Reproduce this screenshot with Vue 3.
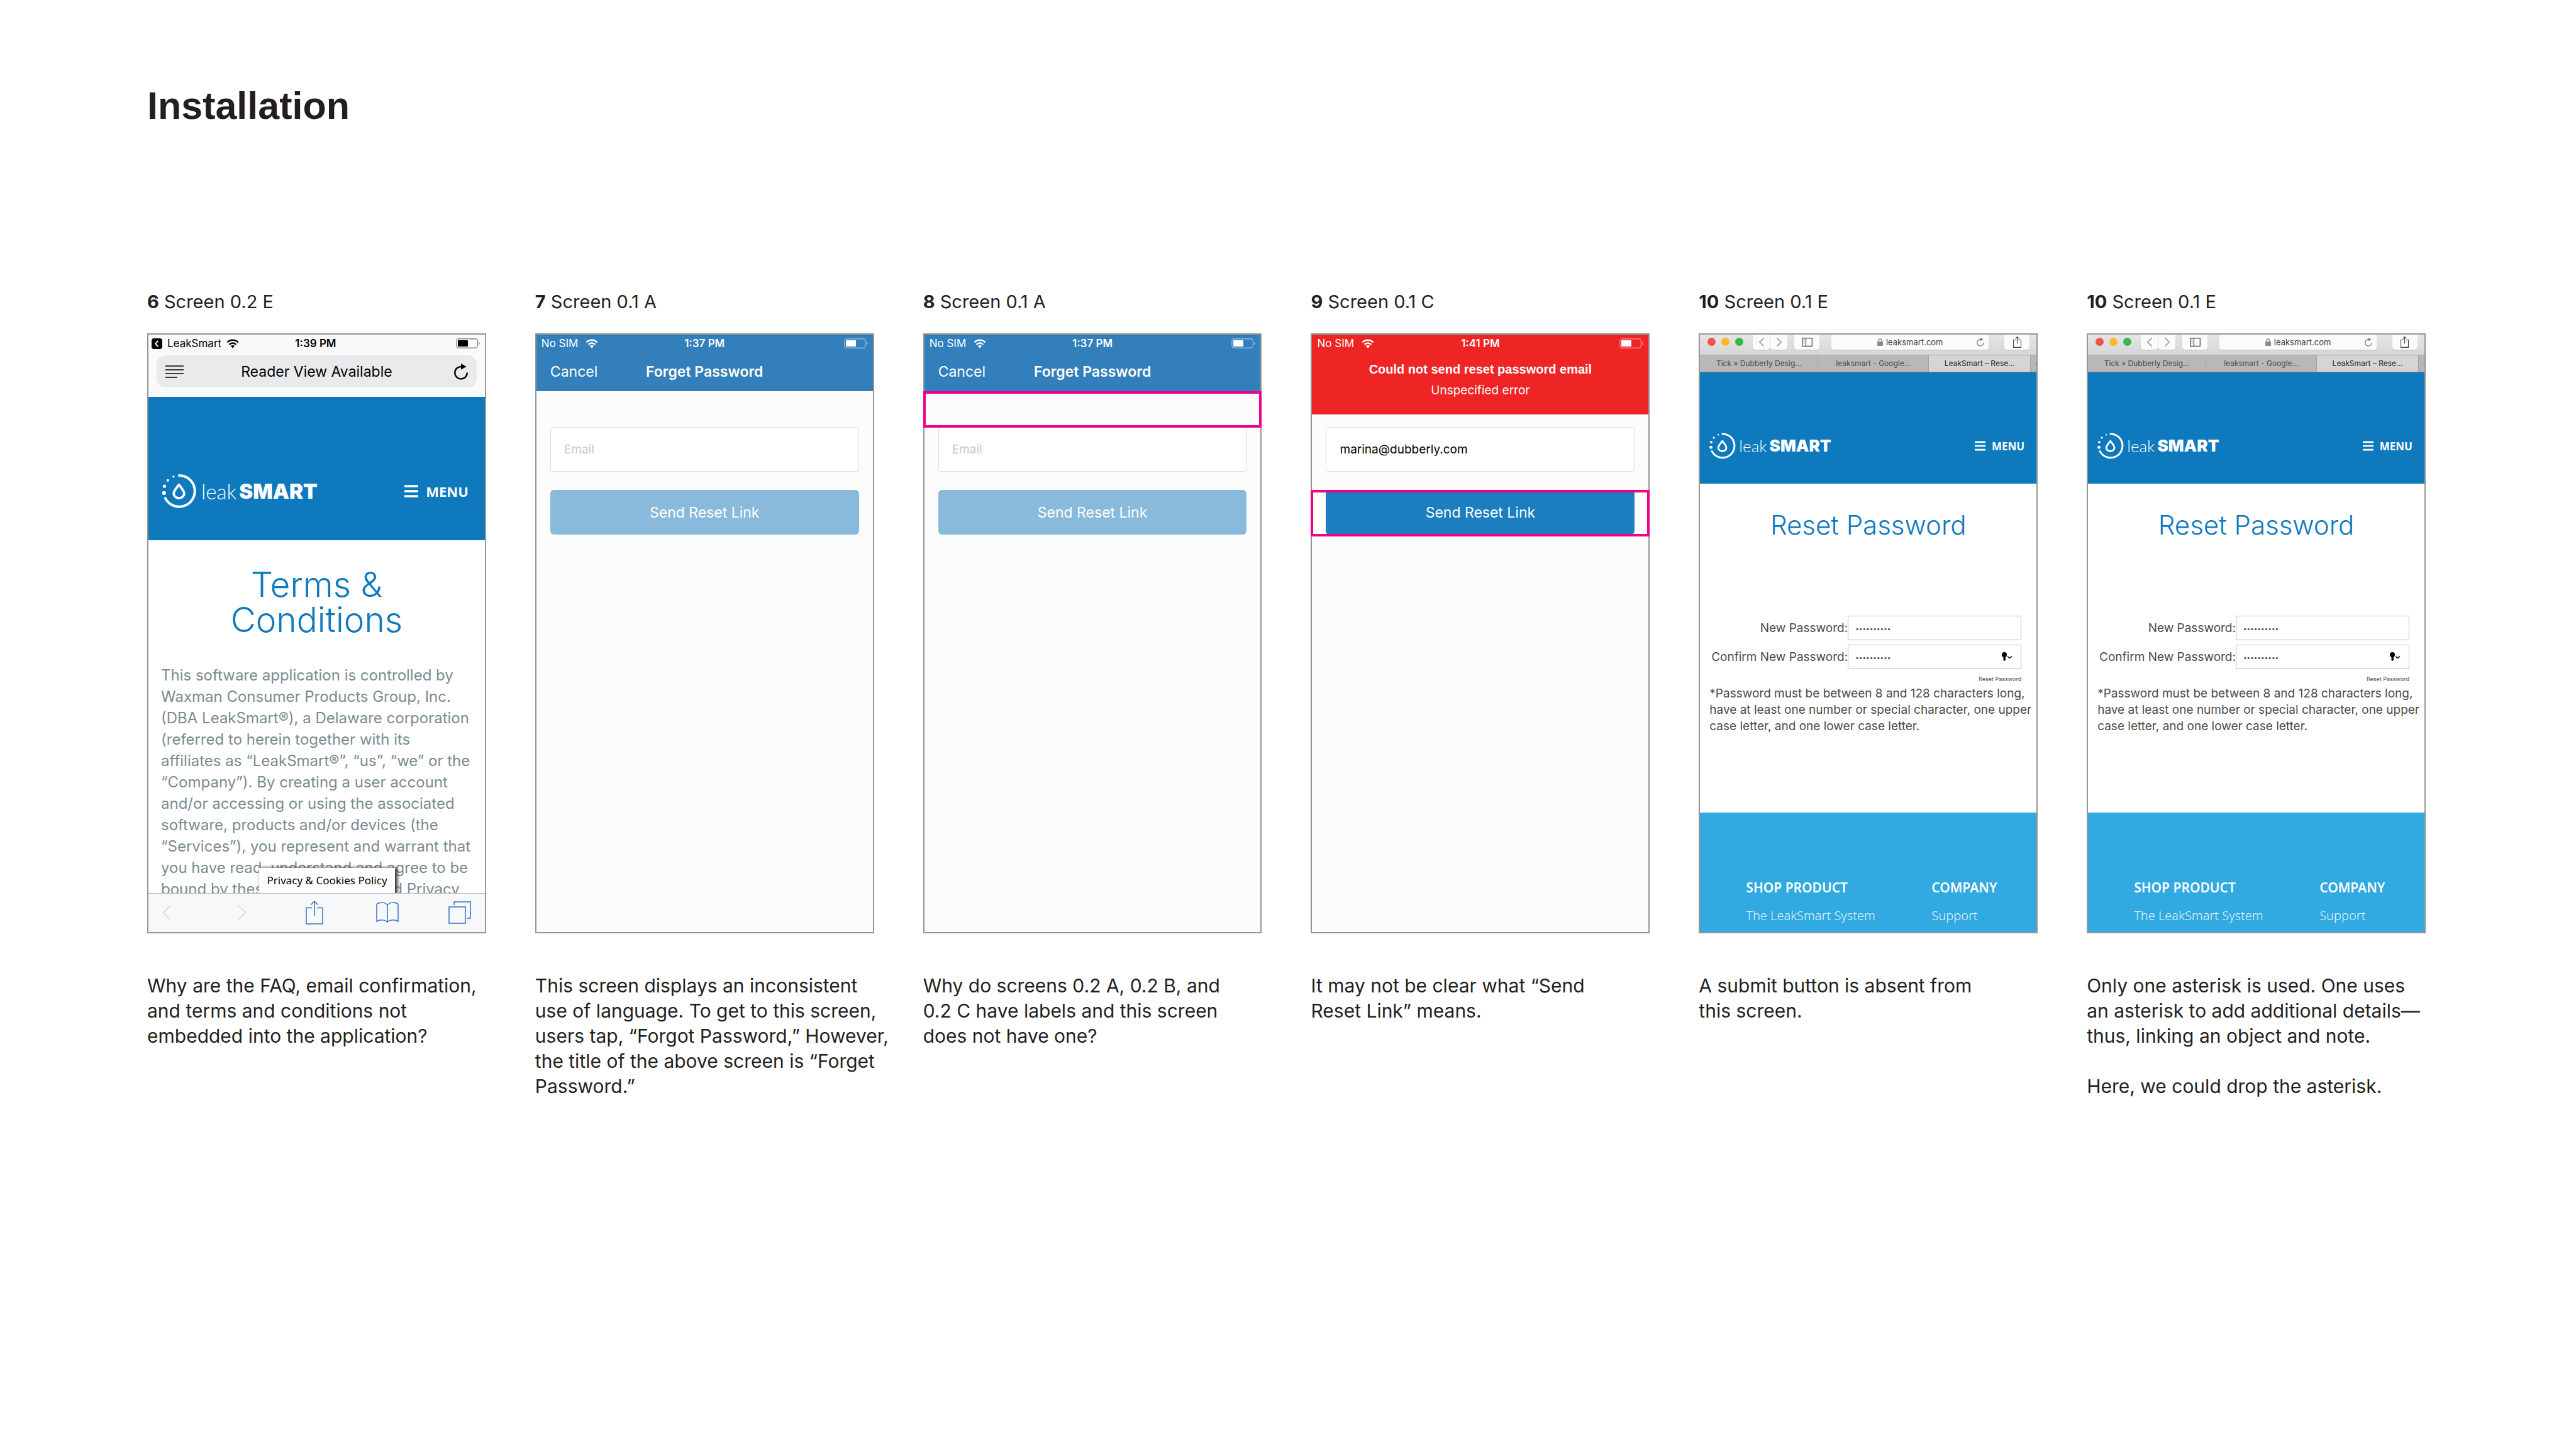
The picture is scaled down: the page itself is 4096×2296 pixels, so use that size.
<script setup>
const cards = [
  {
    kind: 'terms', number: '6', name: 'Screen 0.2 E',
    note: 'Why are the FAQ, email confirmation,\nand terms and conditions not\nembedded into the application?',
  },
  {
    kind: 'forgot', number: '7', name: 'Screen 0.1 A', time: '1:37 PM', email: '',
    note: 'This screen displays an inconsistent\nuse of language. To get to this screen,\nusers tap, “Forgot Password,” However,\nthe title of the above screen is “Forget\nPassword.”',
  },
  {
    kind: 'forgot', number: '8', name: 'Screen 0.1 A', time: '1:37 PM', email: '', mark: 'label',
    note: 'Why do screens 0.2 A, 0.2 B, and\n0.2 C have labels and this screen\ndoes not have one?',
  },
  {
    kind: 'forgot', number: '9', name: 'Screen 0.1 C', time: '1:41 PM', email: 'marina@dubberly.com', error: true, mark: 'button',
    note: 'It may not be clear what “Send\nReset Link” means.',
  },
  {
    kind: 'reset', number: '10', name: 'Screen 0.1 E',
    note: 'A submit button is absent from\nthis screen.',
  },
  {
    kind: 'reset', number: '10', name: 'Screen 0.1 E',
    note: 'Only one asterisk is used. One uses\nan asterisk to add additional details—\nthus, linking an object and note.\n\nHere, we could drop the asterisk.',
  },
]

const terms = [
  'This software application is controlled by',
  'Waxman Consumer Products Group, Inc.',
  '(DBA LeakSmart®), a Delaware corporation',
  '(referred to herein together with its',
  'affiliates as “LeakSmart®”, “us”, “we” or the',
  '“Company”). By creating a user account',
  'and/or accessing or using the associated',
  'software, products and/or devices (the',
  '“Services”), you represent and warrant that',
  'you have read, understand and agree to be',
  'bound by these Terms of Use and Privacy',
].join('\n')

const rule = [
  '*Password must be between 8 and 128 characters long,',
  'have at least one number or special character, one upper',
  'case letter, and one lower case letter.',
].join('\n')
</script>

<template>
  <svg class="sprite" aria-hidden="true">
    <symbol id="wifi" viewBox="0 0 20 15">
      <path d="M1.4 5.4a12.2 12.2 0 0 1 17.2 0M4.6 8.8a7.7 7.7 0 0 1 10.8 0" fill="none" stroke="currentColor" stroke-width="2.5" />
      <path d="M6.9 11.3 10 14.6l3.1-3.3a4.5 4.5 0 0 0-6.2 0z" fill="currentColor" />
    </symbol>
    <symbol id="battery" viewBox="0 0 38 16">
      <rect x=".75" y=".75" width="33.5" height="14.5" rx="3.5" fill="none" stroke="currentColor" stroke-width="1.3" opacity=".45" />
      <rect x="3" y="3" width="16" height="10" rx="1" fill="currentColor" />
      <path d="M36 5.2v5.6c1.1-.6 1.6-1.7 1.6-2.8S37.1 5.8 36 5.2z" fill="currentColor" opacity=".5" />
    </symbol>
    <symbol id="ring" viewBox="0 0 56 55">
      <path d="M28 2A25.3 25.3 0 1 1 5.5 39" fill="none" stroke="currentColor" stroke-width="4" stroke-linecap="round" />
      <circle cx="18.7" cy="3.8" r="1.7" fill="currentColor" />
      <circle cx="9.5" cy="10" r="2.1" fill="currentColor" />
      <circle cx="4" cy="19.5" r="2.6" fill="currentColor" />
      <circle cx="3.3" cy="30.5" r="3.2" fill="currentColor" />
      <path d="M27.5 17C24 21.8 19 27 19 31a8.5 7.8 0 0 0 17 0c0-4-5-9.2-8.5-14z" fill="none" stroke="currentColor" stroke-width="3.8" stroke-linejoin="round" />
    </symbol>
    <symbol id="bars" viewBox="0 0 22 20">
      <path d="M0 2h22M0 10h22M0 18h22" stroke="currentColor" stroke-width="3.4" />
    </symbol>
    <symbol id="share" viewBox="0 0 28 38">
      <path d="M10 11.5H1V37h26V11.5h-9M14 24V1.5M8.5 6.5 14 1l5.5 5.5" fill="none" stroke="currentColor" stroke-width="var(--line, 1.5)" />
    </symbol>
    <symbol id="reload" viewBox="0 0 22 26">
      <path d="M12 5A9.7 9.7 0 1 0 20.7 14.5" fill="none" stroke="currentColor" stroke-width="2.4" />
      <path d="M11 0v9.8l8.5-4.9z" fill="currentColor" />
    </symbol>
    <symbol id="back" viewBox="0 0 14 24">
      <path d="M13 1 1.5 12 13 23" fill="none" stroke="currentColor" stroke-width="var(--line, 1.5)" />
    </symbol>
    <symbol id="forward" viewBox="0 0 14 24">
      <path d="M1 1l11.5 11L1 23" fill="none" stroke="currentColor" stroke-width="var(--line, 1.5)" />
    </symbol>
  </svg>

  <main class="page">
    <h1>Installation</h1>

    <div class="cards">
      <section v-for="(card, i) in cards" :key="i" class="card">
        <h2 class="label"><b>{{ card.number }}</b> {{ card.name }}</h2>

        <!-- Mobile Safari, terms page -->
        <div v-if="card.kind === 'terms'" class="screen terms">
          <header class="safari">
            <div class="status">
              <span class="status-left">
                <svg class="return" viewBox="0 0 17 17"><rect width="17" height="17" rx="4" fill="#000" /><path d="M10.5 4 6 8.5l4.5 4.5" fill="none" stroke="#fff" stroke-width="1.8" /></svg>
                LeakSmart
                <svg class="wifi"><use href="#wifi" /></svg>
              </span>
              <b>1:39 PM</b>
              <svg class="battery"><use href="#battery" /></svg>
            </div>
            <div class="address">
              <svg class="reader" viewBox="0 0 29 20"><path d="M0 1h29M0 7h29M0 13h29M0 19h19" stroke="#000" stroke-width="1.5" /></svg>
              <span>Reader View Available</span>
              <button type="button" aria-label="Reload"><svg class="reload"><use href="#reload" /></svg></button>
            </div>
          </header>
          <div class="brand">
            <a href="#" class="logo"><svg class="ring"><use href="#ring" /></svg><span>leak</span><b>SMART</b></a>
            <button type="button" class="menu"><svg class="bars"><use href="#bars" /></svg>MENU</button>
          </div>
          <div class="terms-body">
            <h3>Terms &amp;<br>Conditions</h3>
            <p>{{ terms }}</p>
            <a href="#" class="cookies">Privacy &amp; Cookies Policy</a>
          </div>
          <nav class="toolbar">
            <button type="button" class="dim first" aria-label="Back"><svg class="chevron"><use href="#back" /></svg></button>
            <button type="button" class="dim" aria-label="Forward"><svg class="chevron"><use href="#forward" /></svg></button>
            <button type="button" aria-label="Share"><svg class="share"><use href="#share" /></svg></button>
            <button type="button" aria-label="Bookmarks">
              <svg class="book" viewBox="0 0 36 34"><path d="M18 5C14 0 5 0 1 4v27c5-3 13-3 17 1 4-4 12-4 17-1V4C31 0 22 0 18 5zv27" fill="none" stroke="currentColor" stroke-width="1.5" /></svg>
            </button>
            <button type="button" aria-label="Tabs">
              <svg class="tabs-icon" viewBox="0 0 36 36"><path d="M1 9h26v26H1zM9 6V1h26v26h-6" fill="none" stroke="currentColor" stroke-width="1.5" /></svg>
            </button>
          </nav>
        </div>

        <!-- App, forget password -->
        <div v-else-if="card.kind === 'forgot'" class="screen forgot">
          <header :class="['app-head', { error: card.error }]">
            <div class="status">
              <span class="status-left">No SIM <svg class="wifi"><use href="#wifi" /></svg></span>
              <b>{{ card.time }}</b>
              <svg class="battery"><use href="#battery" /></svg>
            </div>
            <div v-if="card.error" class="alert" role="alert">
              <b>Could not send reset password email</b>
              <span>Unspecified error</span>
            </div>
            <div v-else class="nav">
              <button type="button">Cancel</button>
              <b>Forget Password</b>
            </div>
          </header>
          <form class="app-form" @submit.prevent>
            <input type="email" placeholder="Email" aria-label="Email" :value="card.email">
            <button type="submit" :class="{ ready: card.email }">Send Reset Link</button>
          </form>
          <div v-if="card.mark" :class="['mark', 'mark-' + card.mark]"></div>
        </div>

        <!-- Desktop Safari, reset password page -->
        <div v-else class="screen reset">
          <header class="window">
            <div class="window-bar">
              <span class="lights"><i></i><i></i><i></i></span>
              <span class="pair">
                <button type="button" aria-label="Back"><svg class="mini-chevron"><use href="#back" /></svg></button>
                <button type="button" aria-label="Forward"><svg class="mini-chevron"><use href="#forward" /></svg></button>
              </span>
              <button type="button" class="side" aria-label="Sidebar">
                <svg class="sidebar" viewBox="0 0 17 14"><path d="M.7.7h15.6v12.6H.7zM6.5.7v12.6M2.5 3.5h2M2.5 6h2M2.5 8.5h2" fill="none" stroke="#444" stroke-width="1.2" /></svg>
              </button>
              <div class="url">
                <svg class="lock" viewBox="0 0 9 12"><rect y="5" width="9" height="7" rx="1" fill="#8a8a8a" /><path d="M2 5.5V3.5a2.5 2.5 0 0 1 5 0v2" fill="none" stroke="#8a8a8a" stroke-width="1.3" /></svg>
                leaksmart.com
                <svg class="mini-reload"><use href="#reload" /></svg>
              </div>
              <button type="button" class="side out" aria-label="Share"><svg class="mini-share"><use href="#share" /></svg></button>
            </div>
            <div class="window-tabs">
              <span>Tick » Dubberly Desig...</span>
              <span>leaksmart - Google...</span>
              <span class="active">LeakSmart – Rese...</span>
              <span class="more"></span>
            </div>
          </header>
          <div class="brand">
            <a href="#" class="logo"><svg class="ring"><use href="#ring" /></svg><span>leak</span><b>SMART</b></a>
            <button type="button" class="menu"><svg class="bars"><use href="#bars" /></svg>MENU</button>
          </div>
          <h3>Reset Password</h3>
          <form class="reset-form" @submit.prevent>
            <label :for="'new-' + i">New Password:</label>
            <input :id="'new-' + i" type="password" value="leaksmart1">
            <label :for="'confirm-' + i">Confirm New Password:</label>
            <div class="keyed">
              <input :id="'confirm-' + i" type="password" value="leaksmart1">
              <svg class="key" viewBox="0 0 17 14"><circle cx="4" cy="4" r="4" fill="#000" /><path d="M2.5 6h3v7L4 14l-1.5-1.2z" fill="#000" /><path d="M5 9h1.5M5 11.5h1.5" stroke="#000" /><path d="M9 6.5l3.5 3 3.5-3" fill="none" stroke="#000" stroke-width="1.6" /></svg>
            </div>
            <button type="submit">Reset Password</button>
          </form>
          <p class="rule">{{ rule }}</p>
          <footer>
            <nav><b>SHOP PRODUCT</b><a href="#">The LeakSmart System</a></nav>
            <nav><b>COMPANY</b><a href="#">Support</a></nav>
          </footer>
        </div>

        <p class="note">{{ card.note }}</p>
      </section>
    </div>
  </main>
</template>

<style>
body {
  margin: 0;
  background: #fff;
}
</style>

<style scoped>
* {
  box-sizing: border-box;
}
.sprite {
  position: absolute;
  width: 0;
  height: 0;
}
svg {
  display: block;
  flex: none;
}
button,
input {
  margin: 0;
  padding: 0;
  border: 0;
  background: none;
  color: inherit;
  font: inherit;
}
a {
  color: inherit;
  text-decoration: none;
}
.page {
  padding: 130px 239px 120px 234px;
  color: #231f20;
  font-family: Inter, "Liberation Sans", sans-serif;
}
h1 {
  margin: 0 0 254px;
  font: 700 61px/76px "Liberation Sans", sans-serif;
}
.cards {
  display: grid;
  grid-template-columns: repeat(6, minmax(0, 1fr));
  gap: 78px;
}
.label {
  margin: 0 0 30px;
  font-size: 29px;
  font-weight: 400;
  line-height: 40px;
}
.note {
  margin: 63px 0 0;
  font-size: 30px;
  line-height: 40px;
  white-space: pre;
}
.screen {
  position: relative;
  display: flex;
  flex-direction: column;
  aspect-ratio: 539 / 954;
  border: 2px solid #969696;
  background: #fff;
}

/* Status bar */
.status {
  display: grid;
  grid-template-columns: 1fr auto 1fr;
  align-items: center;
  height: 28px;
  padding: 0 8px;
  font-size: 17px;
}
.status b {
  font-weight: 600;
}
.status-left {
  display: flex;
  align-items: center;
  gap: 12px;
}
.wifi {
  width: 20px;
  height: 15px;
}
.battery {
  width: 38px;
  height: 16px;
  justify-self: end;
}

/* Brand band */
.brand {
  display: flex;
  align-items: center;
  justify-content: space-between;
  padding: 123px 26px 51px 21px;
  background: #0e79bd;
  color: #fff;
}
.logo {
  display: flex;
  align-items: center;
  font-size: 33px;
  line-height: 54px;
}
.ring {
  width: 56px;
  height: 54px;
  margin-right: 7px;
}
.logo span {
  margin-right: 4px;
  font-family: Lato, sans-serif;
  font-weight: 300;
}
.logo b {
  font-weight: 900;
}
.menu {
  display: flex;
  align-items: center;
  gap: 12px;
  font: 700 22px "Open Sans", sans-serif;
}
.bars {
  width: 22px;
  height: 20px;
}

/* Terms screen */
.safari {
  background: #fafafa;
}
.terms .status {
  padding-left: 5px;
  color: #000;
}
.terms .status-left {
  gap: 8px;
}
.return {
  width: 17px;
  height: 17px;
}
.address {
  display: flex;
  align-items: center;
  justify-content: space-between;
  height: 51px;
  margin: 5px 13px 15px;
  padding: 0 14px;
  border-radius: 14px;
  background: #e9eaec;
  color: #000;
  font-size: 23px;
}
.address button {
  display: flex;
  justify-content: flex-end;
  width: 29px;
}
.reader {
  width: 29px;
  height: 20px;
}
.reload {
  width: 22px;
  height: 26px;
}
.terms-body {
  position: relative;
  flex: 1;
  min-height: 0;
  overflow: hidden;
}
h3 {
  margin: 42px 0 44px;
  color: #0e79bd;
  font-size: 55px;
  font-weight: 300;
  line-height: 56px;
  text-align: center;
}
.terms-body p {
  margin: 0 0 0 20px;
  color: #7a8c8f;
  font-size: 24px;
  line-height: 34px;
  white-space: pre;
}
.cookies {
  position: absolute;
  bottom: 0;
  left: 33%;
  padding: 0 12px;
  background: #fff;
  box-shadow: 3px 1px 5px 1px #333;
  color: #000;
  font: 400 17px/40px "Noto Sans", sans-serif;
}
.toolbar {
  display: flex;
  align-items: center;
  justify-content: space-between;
  height: 62px;
  padding: 0 22px;
  border-top: 1px solid #b9bbbd;
  background: #f7f8fa;
  color: #3573c4;
}
.toolbar button {
  display: flex;
  justify-content: center;
  width: 36px;
}
.toolbar .first {
  justify-content: flex-start;
  width: 30px;
}
.toolbar .dim {
  color: #d3d4d6;
}
.chevron {
  width: 14px;
  height: 24px;
}
.share {
  width: 28px;
  height: 38px;
}
.book {
  width: 36px;
  height: 34px;
}
.tabs-icon {
  width: 36px;
  height: 36px;
}

/* Forget password screens */
.forgot {
  background: #fcfcfc;
}
.app-head {
  height: 90px;
  background: #337fbb;
  color: #fff;
}
.app-head.error {
  height: 127px;
  background: #ef2525;
}
.nav {
  display: grid;
  grid-template-columns: 1fr auto 1fr;
  align-items: center;
  height: 62px;
  padding: 0 22px;
  font-size: 23px;
}
.nav button {
  justify-self: start;
}
.nav b {
  font-weight: 600;
}
.alert {
  display: flex;
  flex-direction: column;
  align-items: center;
  padding-top: 10px;
  font-size: 19px;
  line-height: 34px;
}
.alert b {
  font-family: "Liberation Sans", sans-serif;
  font-size: 20px;
}
.app-form {
  display: flex;
  flex-direction: column;
  gap: 29px;
  padding: 57px 22px 0;
}
.error + .app-form {
  padding-top: 20px;
}
.app-form input {
  height: 71px;
  padding: 0 21px;
  border: 1px solid #dcddde;
  border-radius: 4px;
  background: #fff;
  color: #000;
  font-size: 19px;
}
.app-form input::placeholder {
  color: #c7c7cc;
}
.app-form button {
  height: 71px;
  border-radius: 6px;
  background: #89badc;
  color: #fff;
  font-size: 23px;
}
.app-form .ready {
  background: #1c7ebe;
}
.mark {
  position: absolute;
  right: -2px;
  left: -2px;
  border: 4px solid #ec008c;
}
.mark-label {
  top: 90px;
  height: 58px;
}
.mark-button {
  top: 247px;
  height: 74px;
}

/* Reset password screens */
.window-bar {
  display: flex;
  align-items: flex-start;
  height: 32px;
  padding-left: 12px;
  background: linear-gradient(#e6e6e6, #d6d6d6);
  overflow: hidden;
}
.lights {
  display: flex;
  gap: 9px;
  margin: 5px 15px 0 0;
}
.lights i {
  width: 13px;
  height: 13px;
  border-radius: 50%;
  background: #f0544f;
}
.lights i:nth-child(2) {
  background: #fdb827;
}
.lights i:nth-child(3) {
  background: #3cb548;
}
.pair {
  display: flex;
  gap: 1px;
  margin-right: 11px;
}
.window-bar button,
.url {
  display: flex;
  align-items: center;
  justify-content: center;
  width: 27px;
  height: 24px;
  border-radius: 0 0 4px 4px;
  background: #fbfbfb;
  box-shadow: 0 1px 1px #bbb;
  color: #9a9a9a;
}
.window-bar .side {
  width: 40px;
  color: #444;
}
.window-bar .out {
  margin-right: 11px;
}
.url {
  position: relative;
  flex: 1;
  gap: 5px;
  margin: 0 25px 0 19px;
  color: #444;
  font-size: 13px;
}
.lock {
  width: 9px;
  height: 12px;
}
.mini-chevron {
  --line: 3;
  width: 8px;
  height: 14px;
}
.sidebar {
  width: 17px;
  height: 14px;
}
.mini-reload {
  position: absolute;
  right: 7px;
  width: 12px;
  height: 14px;
  color: #777;
}
.mini-share {
  --line: 2.6;
  width: 13px;
  height: 18px;
}
.window-tabs {
  display: grid;
  grid-template-columns: 187fr 176fr 162fr 10fr;
  height: 28px;
  border-top: 1px solid #a5a5a5;
  border-bottom: 1px solid #8f8f8f;
  background: #b8b8b8;
  color: #4a4a4a;
  font-size: 12px;
  line-height: 26px;
  text-align: center;
}
.window-tabs span + span {
  border-left: 1px solid #a2a2a2;
}
.window-tabs .active {
  background: #d5d5d5;
  color: #222;
}
.window-tabs .more {
  background: linear-gradient(#666, #666) right 13px / 2px 1px no-repeat;
}
.reset .brand {
  padding: 96px 19px 39px 15px;
}
.reset .logo {
  font-size: 26px;
  line-height: 42px;
}
.reset .ring {
  width: 42px;
  height: 42px;
  margin-right: 5px;
}
.reset .menu {
  gap: 10px;
  font-size: 17px;
}
.reset .bars {
  width: 17px;
  height: 16px;
}
.reset h3 {
  margin: 38px 0 116px;
  font-size: 42px;
}
.reset-form {
  display: grid;
  grid-template-columns: 1fr 276px;
  row-gap: 7px;
  align-items: center;
  padding-right: 24px;
  color: #4b4b4d;
  font-size: 19px;
  text-align: right;
}
.reset-form input {
  width: 100%;
  height: 39px;
  padding: 0 11px;
  border: 1px solid #b9b9bb;
  background: #fff;
  font-size: 10px;
}
.keyed {
  position: relative;
}
.key {
  position: absolute;
  top: 12px;
  right: 14px;
  width: 17px;
  height: 14px;
}
.reset-form button {
  grid-column: 2;
  justify-self: end;
  margin-top: 3px;
  font-size: 9px;
  line-height: 12px;
}
.rule {
  margin: 4px 0 0 15px;
  color: #4b4b4d;
  font-size: 19px;
  line-height: 26px;
  white-space: pre;
}
footer {
  display: grid;
  grid-template-columns: 295px auto;
  margin-top: auto;
  padding: 104px 0 11px 73px;
  background: #31a9e1;
  color: #fff;
  font-family: "Noto Sans", sans-serif;
  font-size: 20px;
  line-height: 30px;
}
footer nav {
  display: flex;
  flex-direction: column;
  gap: 15px;
}
footer b {
  font-size: 21px;
  font-weight: 600;
}
footer a {
  color: #e2f3fb;
  font-weight: 300;
}
</style>
